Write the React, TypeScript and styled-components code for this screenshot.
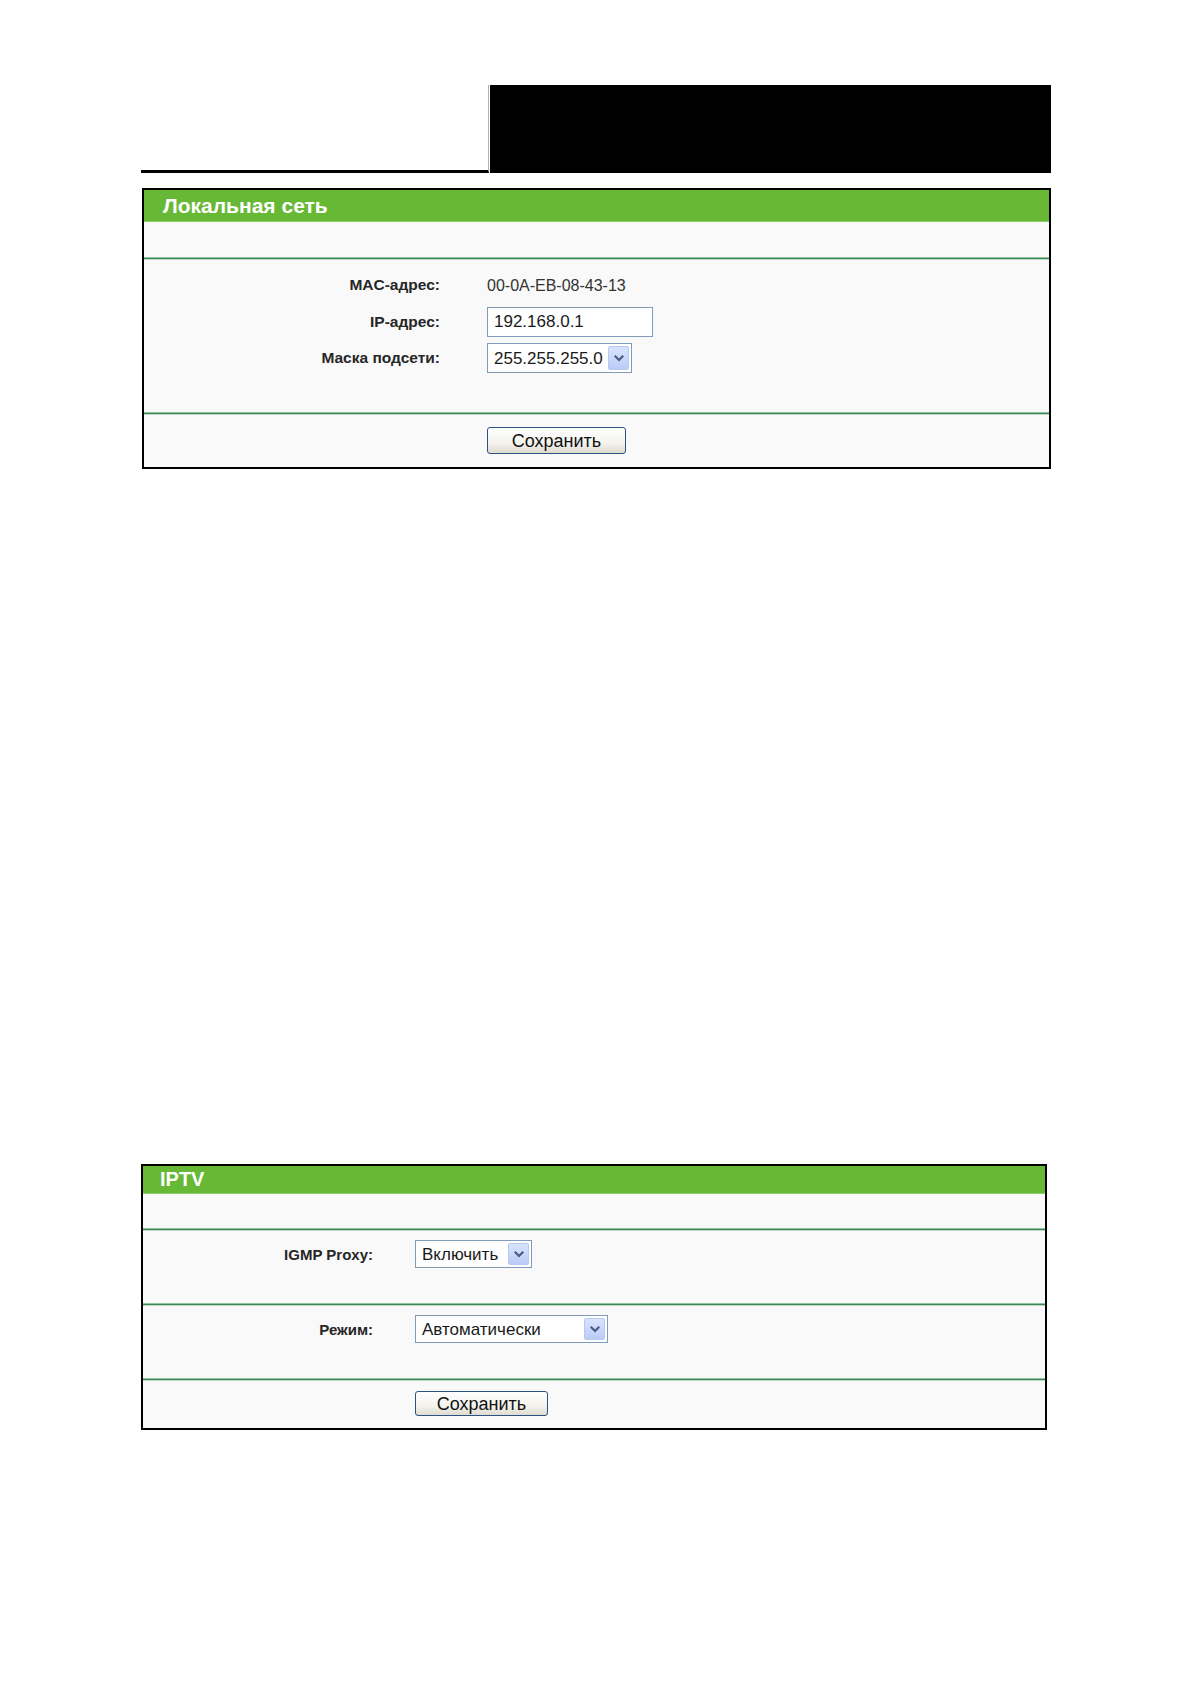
import React from 'react';
import styled, { createGlobalStyle } from 'styled-components';

const GlobalStyle = createGlobalStyle`
    body {
        margin: 0;
        background: #ffffff;
        font-family: "Liberation Sans", Arial, sans-serif;
    }
`;

function Chevron() {
    return (
        <svg width="10" height="7" viewBox="0 0 10 7">
            <path d="M1.5 1.5 L5 5 L8.5 1.5" fill="none" stroke="#4a5c80" strokeWidth="2.2" strokeLinecap="square"/>
        </svg>
    )
}

function Select({ value, width, height }: { value: string; width: number; height: number }) {
    return (
        <SelectBox $w={width} $h={height}>
            <SelectText>{value}</SelectText>
            <DropButton><Chevron/></DropButton>
        </SelectBox>
    )
}

export default function App() {
    return (
        <Page>
            <GlobalStyle/>
            <TopBar>
                <TopLine/>
                <BlackBlock/>
            </TopBar>

            <Panel $w={909} $top={15} $left={1}>
                <Header $h={32} $size={21} $pad={19}>Локальная сеть</Header>
                <Blank $h={35}/>
                <Divider/>
                <FormBody $label={296} $gap={47} $pt={7} $pb={36}>
                    <FieldRow $h={36}>
                        <Label $size={15.5}>MAC-адрес:</Label>
                        <Value>00-0A-EB-08-43-13</Value>
                    </FieldRow>
                    <FieldRow $h={36}>
                        <Label $size={15.5}>IP-адрес:</Label>
                        <TextInput value="192.168.0.1" readOnly/>
                    </FieldRow>
                    <FieldRow $h={36}>
                        <Label $size={15.5}>Маска подсети:</Label>
                        <Select value="255.255.255.0" width={145} height={30}/>
                    </FieldRow>
                </FormBody>
                <Divider/>
                <ButtonRow $label={296} $gap={47} $h={52} $pt={12}>
                    <span/>
                    <SaveButton $w={139} $h={27}>Сохранить</SaveButton>
                </ButtonRow>
            </Panel>

            <Panel $w={906} $top={695} $left={0}>
                <Header $h={28} $size={20} $pad={17}>IPTV</Header>
                <Blank $h={34}/>
                <Divider/>
                <FormBody $label={230} $gap={42} $pt={9} $pb={35}>
                    <FieldRow $h={28}>
                        <Label $size={15}>IGMP Proxy:</Label>
                        <Select value="Включить" width={117} height={28}/>
                    </FieldRow>
                </FormBody>
                <Divider/>
                <FormBody $label={230} $gap={42} $pt={9} $pb={35}>
                    <FieldRow $h={28}>
                        <Label $size={15}>Режим:</Label>
                        <Select value="Автоматически" width={193} height={28}/>
                    </FieldRow>
                </FormBody>
                <Divider/>
                <ButtonRow $label={230} $gap={42} $h={47} $pt={10}>
                    <span/>
                    <SaveButton $w={133} $h={25}>Сохранить</SaveButton>
                </ButtonRow>
            </Panel>
        </Page>
    )
}

const Page = styled.div`
    width: 1191px;
    min-height: 1684px;
    padding: 85px 0 0 141px;
    box-sizing: border-box;
`;

const TopBar = styled.div`
    display: flex;
    width: 910px;
    height: 88px;
`;

const TopLine = styled.div`
    width: 348px;
    border-bottom: 3px solid #000000;
    border-right: 1px solid #b0b0b0;
    box-sizing: border-box;
`;

const BlackBlock = styled.div`
    flex: 1;
    background: #000000;
    margin-left: 1px;
`;

const Panel = styled.div<{ $w: number; $top: number; $left: number }>`
    width: ${p => p.$w}px;
    margin-top: ${p => p.$top}px;
    margin-left: ${p => p.$left}px;
    border: 2px solid #000000;
    box-sizing: border-box;
    background: #f9f9f9;
`;

const Header = styled.div<{ $h: number; $size: number; $pad: number }>`
    height: ${p => p.$h}px;
    line-height: ${p => p.$h - 1}px;
    padding-left: ${p => p.$pad}px;
    background: #67b834;
    color: #ffffff;
    font-weight: bold;
    font-size: ${p => p.$size}px;
    border-bottom: 1px solid #8ccf6a;
    box-sizing: border-box;
`;

const Blank = styled.div<{ $h: number }>`
    height: ${p => p.$h}px;
`;

const Divider = styled.div`
    height: 1px;
    background: #3f8757;
    border-top: 1px solid #93c2a2;
    border-bottom: 1px solid #bcdac6;
`;

const FormBody = styled.div<{ $label: number; $gap: number; $pt: number; $pb: number }>`
    display: grid;
    grid-template-columns: ${p => p.$label}px 1fr;
    column-gap: ${p => p.$gap}px;
    padding: ${p => p.$pt}px 0 ${p => p.$pb}px;
`;

const FieldRow = styled.div<{ $h: number }>`
    display: contents;
    & > * {
        height: ${p => p.$h}px;
    }
`;

const Label = styled.div<{ $size: number }>`
    display: flex;
    align-items: center;
    justify-content: flex-end;
    font-size: ${p => p.$size}px;
    font-weight: bold;
    color: #262626;
`;

const Value = styled.div`
    display: flex;
    align-items: center;
    padding-top: 1px;
    font-size: 16px;
    color: #333333;
`;

const TextInput = styled.input`
    align-self: center;
    box-sizing: border-box;
    width: 166px;
    height: 30px !important;
    border: 1px solid #7f9db9;
    background: #ffffff;
    padding: 0 0 0 6px;
    font-family: "Liberation Sans", Arial, sans-serif;
    font-size: 17px;
    color: #1a1a1a;
    outline: none;
`;

const SelectBox = styled.div<{ $w: number; $h: number }>`
    align-self: center;
    box-sizing: border-box;
    width: ${p => p.$w}px;
    height: ${p => p.$h}px !important;
    display: flex;
    align-items: stretch;
    border: 1px solid #7f9db9;
    background: #ffffff;
    padding: 2px;
`;

const SelectText = styled.span`
    flex: 1;
    display: flex;
    align-items: center;
    padding: 1px 0 0 4px;
    font-size: 17px;
    color: #1a1a1a;
    white-space: nowrap;
`;

const DropButton = styled.span`
    width: 19px;
    display: flex;
    align-items: center;
    justify-content: center;
    border: 1px solid #b7c9f2;
    border-radius: 2px;
    background: linear-gradient(#d9e4fd, #b9ccf7);
`;

const ButtonRow = styled.div<{ $label: number; $gap: number; $h: number; $pt: number }>`
    display: grid;
    grid-template-columns: ${p => p.$label}px 1fr;
    column-gap: ${p => p.$gap}px;
    height: ${p => p.$h}px;
    padding-top: ${p => p.$pt}px;
    box-sizing: border-box;
    align-items: start;
`;

const SaveButton = styled.button<{ $w: number; $h: number }>`
    width: ${p => p.$w}px;
    height: ${p => p.$h}px;
    border: 1px solid #2e5184;
    border-radius: 3px;
    background: linear-gradient(#ffffff 0%, #f4f3ee 60%, #dedbd0 100%);
    font-family: "Liberation Sans", Arial, sans-serif;
    font-size: 18px;
    color: #111111;
    padding: 0;
    line-height: 1;
`;
